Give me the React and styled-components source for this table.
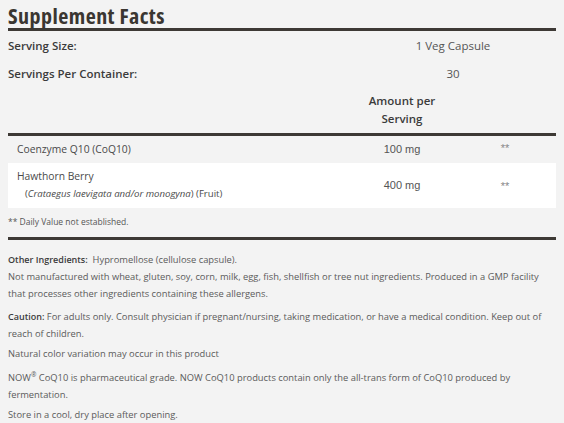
import React from "react";
import styled, { createGlobalStyle } from "styled-components";

const Global = createGlobalStyle`
  html, body { margin: 0; padding: 0; background: #f3f3f3; }
  body { font-family: "Open Sans", "Noto Sans", sans-serif; color: #555; }
`;

const Page = styled.div`
  padding: 2px 8px 0;
  width: 548px;
`;

const Title = styled.h2`
  margin: 0;
  font-family: "Open Sans", sans-serif;
  font-size: 22px;
  font-stretch: 84%;
  letter-spacing: 0.45px;
  line-height: 26px;
  font-weight: 700;
  color: #3a3631;
  border-bottom: 3px solid #3d3935;
`;

const Grid = styled.div`
  display: grid;
  grid-template-columns: 342px 104px 1fr;
  border-bottom: ${(p) => (p.$rule ? "3px solid #3d3935" : "none")};
`;

const InfoRow = styled.div`
  display: grid;
  grid-template-columns: 342px 1fr;
  height: 28px;
  align-items: center;
  font-size: 11.5px;
`;

const InfoLabel = styled.div`
  font-weight: 600;
  color: #3b3b3b;
`;

const InfoValue = styled.div`
  text-align: center;
  color: #555;
`;

const HeadCell = styled.div`
  grid-column: ${(p) => p.$col || "auto"};
  justify-self: center;
  width: 78px;
  padding: 5px 0;
  font-size: 11.5px;
  line-height: 18px;
  font-weight: 600;
  color: #3b3b3b;
  text-align: center;
`;

const Row = styled.div`
  display: grid;
  grid-template-columns: 342px 104px 1fr;
  background: ${(p) => (p.$white ? "#fff" : "transparent")};
  padding: 4px 0 5px;
  align-items: center;
`;

const Name = styled.div`
  padding-left: 9px;
  font-size: 10.3px;
  line-height: 18px;
  color: #4a4a4a;
`;

const Sub = styled.div`
  padding-left: 8px;
  font-size: 9.6px;
`;

const Amount = styled.div`
  text-align: center;
  font-family: "Liberation Sans", Arial, sans-serif;
  font-size: 11px;
  color: #555;
`;

const Dv = styled.div`
  text-align: center;
  font-family: "Liberation Sans", Arial, sans-serif;
  font-size: 11px;
  color: #888;
  align-self: start;
  padding-top: ${(p) => (p.$top ? p.$top : 0)}px;
`;

const Foot = styled.div`
  font-size: 8.5px;
  line-height: 14px;
  padding: 7px 0 8px;
  color: #555;
  border-bottom: 3px solid #3d3935;
`;

const Notes = styled.div`
  padding-top: 11px;
  font-size: 9.35px;
  line-height: 17px;
  color: #5b5b5b;
`;

const P = styled.p`
  margin: ${(p) => p.$mt || 0}px 0 0;
`;

const B = styled.span`
  font-weight: 600;
  color: #3b3b3b;
  font-size: 9px;
`;

const Reg = styled.sup`
  font-size: 6.5px;
  line-height: 0;
  vertical-align: 4px;
`;

export default function App() {
  return (
    <>
      <Global />
      <Page>
        <Title>Supplement Facts</Title>
        <InfoRow>
          <InfoLabel>Serving Size:</InfoLabel>
          <InfoValue>1 Veg Capsule</InfoValue>
        </InfoRow>
        <InfoRow>
          <InfoLabel>Servings Per Container:</InfoLabel>
          <InfoValue>30</InfoValue>
        </InfoRow>
        <Grid $rule>
          <HeadCell $col="2">Amount per Serving</HeadCell>
        </Grid>
        <Row>
          <Name>Coenzyme Q10 (CoQ10)</Name>
          <Amount>100 mg</Amount>
          <Dv $top={2}>**</Dv>
        </Row>
        <Row $white>
          <Name>
            Hawthorn Berry
            <Sub>
              (<i>Crataegus laevigata and/or monogyna</i>) (Fruit)
            </Sub>
          </Name>
          <Amount>400 mg</Amount>
          <Dv $top={13}>**</Dv>
        </Row>
        <Foot>** Daily Value not established.</Foot>
        <Notes>
          <P>
            <B>Other Ingredients:</B>&nbsp; Hypromellose (cellulose capsule).
          </P>
          <P>
            Not manufactured with wheat, gluten, soy, corn, milk, egg, fish,
            shellfish or tree nut ingredients. Produced in a GMP facility that
            processes other ingredients containing these allergens.
          </P>
          <P $mt={6}>
            <B>Caution:</B> For adults only. Consult physician if
            pregnant/nursing, taking medication, or have a medical condition.
            Keep out of reach of children.
          </P>
          <P $mt={3}>Natural color variation may occur in this product</P>
          <P $mt={7}>
            NOW<Reg>®</Reg> CoQ10 is pharmaceutical grade. NOW CoQ10 products
            contain only the all-trans form of CoQ10 produced by fermentation.
          </P>
          <P $mt={3}>Store in a cool, dry place after opening.</P>
        </Notes>
      </Page>
    </>
  );
}
